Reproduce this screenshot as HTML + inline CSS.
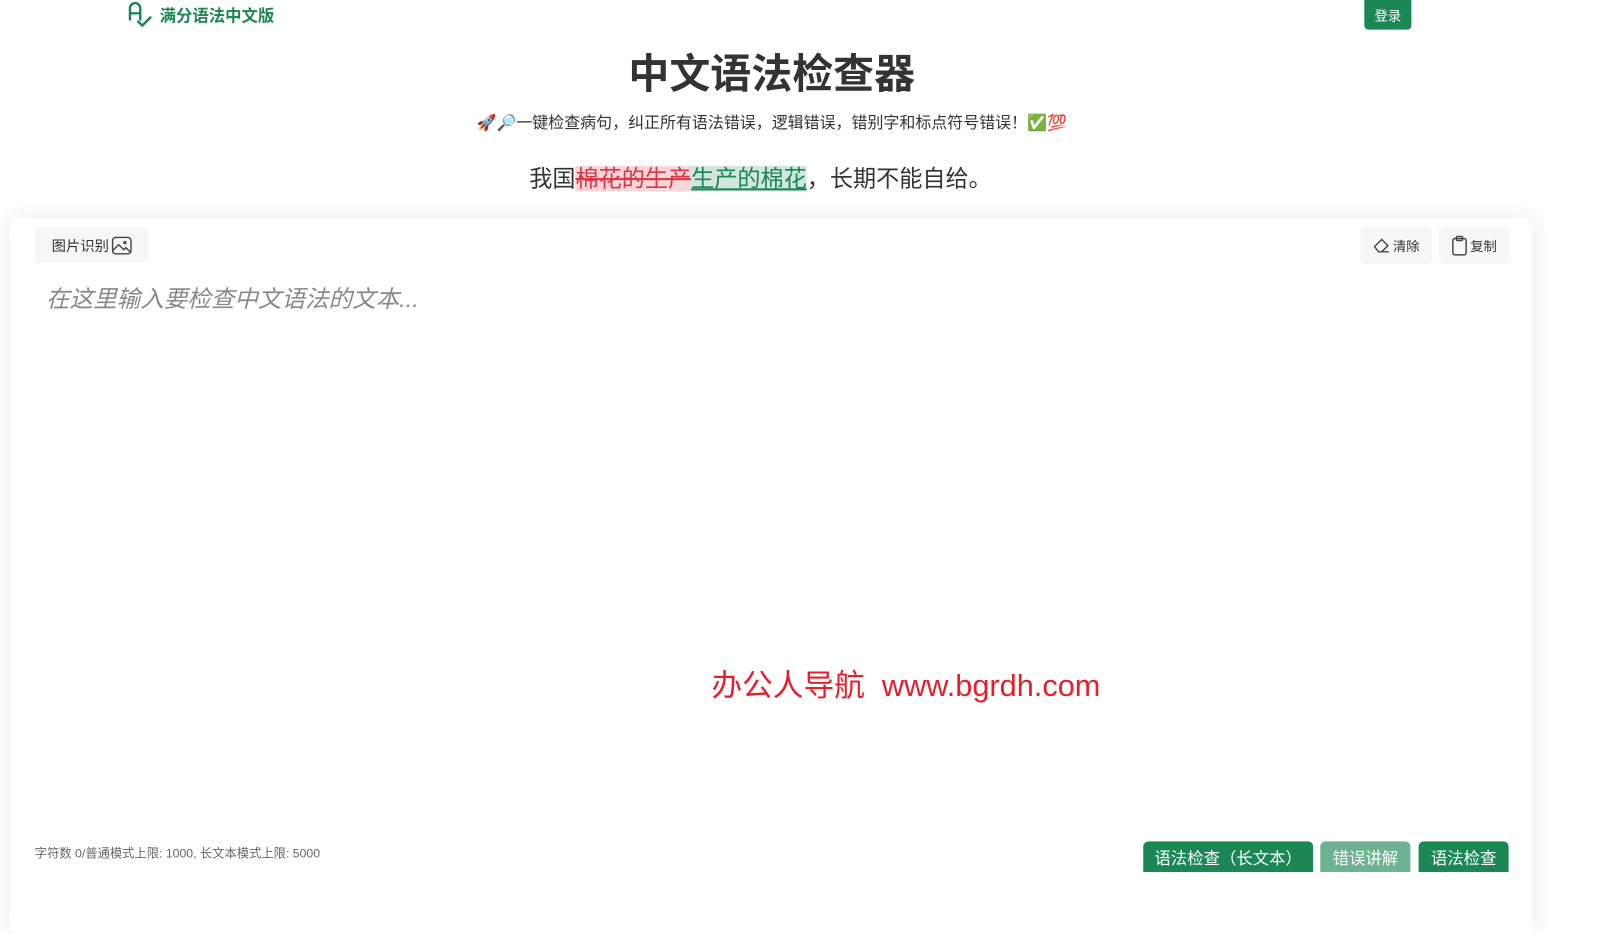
<!DOCTYPE html>
<html><head><meta charset="utf-8">
<style>
*{margin:0;padding:0;box-sizing:border-box}
html,body{width:1605px;height:870px;overflow:hidden;background:#fff;font-family:"Liberation Sans","Noto Sans CJK SC",sans-serif;color:#333}
#w{position:absolute;left:0;top:0;width:1561px;height:850px;transform:scale(1.0235);transform-origin:0 0}
.abs{position:absolute}
.logo{left:124px;top:1px;display:flex;align-items:center;gap:6px;color:#1a8754;font-weight:bold;font-size:16px}
.login{left:1333px;top:0;width:46px;height:29px;background:#1a8754;color:#fff;font-size:13px;border-radius:0 0 4px 4px;display:flex;align-items:center;justify-content:center}
h1{position:absolute;left:0;width:1508px;text-align:center;top:40px;font-size:40px;font-weight:bold;color:#333}
.sub{left:0;width:1508px;text-align:center;top:108px;font-size:15.6px;color:#333}
.ex{left:0;width:1486px;text-align:center;top:156px;font-size:22.6px;color:#333}
.del{background:#f8d7da;color:#dc3545;text-decoration:line-through}
.ins{background:#d1e7dd;color:#1a8754;text-decoration:underline}
.card{left:10px;top:213px;width:1487px;height:700px;background:#fff;border-radius:8px;box-shadow:0 0 24px rgba(0,0,0,0.08)}
.btn{background:#f7f7f7;border-radius:5px;display:flex;align-items:center;justify-content:center;font-size:14px;color:#333;gap:2px}
.ph{left:45px;top:273px;font-size:23px;color:#888;font-style:italic}
.wm{left:695px;top:645px;font-size:30px;color:#e5202e}
.cnt{left:34px;top:825px;font-size:12px;color:#666}
.g{background:#1a8754;color:#fff;font-size:16px;border-radius:5px 5px 0 0;height:30px;top:822px;display:flex;align-items:center;justify-content:center}
</style></head><body><div id="w">
<div class="abs logo">
<svg width="26" height="26" viewBox="0 0 26 26" fill="none" stroke="#1a8754" stroke-width="2.4" stroke-linecap="round" stroke-linejoin="round"><path d="M3 18V7a5 5 0 0 1 10 0v11M3 12h10"/><path d="M11 20l4 4 8-8"/></svg>
<span>满分语法中文版</span></div>
<div class="abs login">登录</div>
<h1>中文语法检查器</h1>
<div class="abs sub">🚀🔎一键检查病句，纠正所有语法错误，逻辑错误，错别字和标点符号错误！✅💯</div>
<div class="abs ex">我国<span class="del">棉花的生产</span><span class="ins">生产的棉花</span>，长期不能自给。</div>
<div class="abs card"></div>
<div class="abs btn" style="left:34px;top:222px;width:111px;height:35px">图片识别<svg width="20" height="18" viewBox="0 0 20 18" fill="none" stroke="#444" stroke-width="1.4"><rect x="1" y="1" width="18" height="16" rx="3"/><path d="M1 14l6-6 5 5 2-2 5 5"/><circle cx="13" cy="6" r="1"/></svg></div>
<div class="abs btn" style="left:1329px;top:221px;width:70px;height:37px"><svg width="18" height="18" viewBox="0 0 18 18" fill="none" stroke="#444" stroke-width="1.4"><path d="M2 10l7-7 6 6-6 6H6z"/><path d="M9 15h7"/></svg><span style="font-size:13px">清除</span></div>
<div class="abs btn" style="left:1406px;top:221px;width:69px;height:37px"><svg width="16" height="20" viewBox="0 0 16 20" fill="none" stroke="#444" stroke-width="1.4"><rect x="1.5" y="3" width="13" height="16" rx="2"/><rect x="5" y="1" width="6" height="4" rx="1"/></svg><span style="font-size:13px">复制</span></div>
<div class="abs ph">在这里输入要检查中文语法的文本...</div>
<div class="abs wm">办公人导航&nbsp;&nbsp;www.bgrdh.com</div>
<div class="abs cnt">字符数 0/普通模式上限: 1000, 长文本模式上限: 5000</div>
<div class="abs g" style="left:1117px;width:166px">语法检查（长文本）</div>
<div class="abs g" style="left:1290px;width:88px;background:#6bb391">错误讲解</div>
<div class="abs g" style="left:1386px;width:88px">语法检查</div>
</div></body></html>
